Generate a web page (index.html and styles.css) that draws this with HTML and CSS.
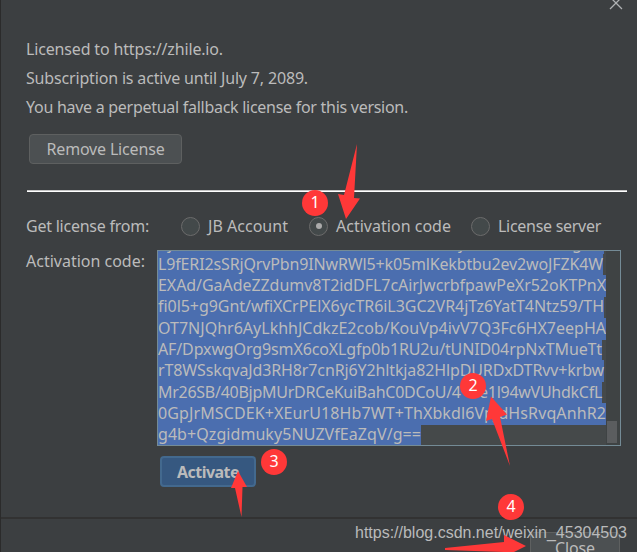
FILE: index.html
```html
<!DOCTYPE html>
<html lang="en">
<head>
<meta charset="utf-8">
<title>Licenses</title>
<link rel="stylesheet" href="styles.css">
</head>
<body>
<main class="dialog">
  <svg class="close-x" viewBox="0 0 14 14"><path d="M1 1 13 13M13 1 1 13"/></svg>
  <section class="status">
    <p><span data-width="197">Licensed to https://zhile.io.</span></p>
    <p><span data-width="282">Subscription is active until July 7, 2089.</span></p>
    <p><span data-width="382">You have a perpetual fallback license for this version.</span></p>
    <button class="button remove"><span data-width="118">Remove License</span></button>
  </section>
  <hr class="rule">
  <section class="source">
    <span class="label"><span data-width="123">Get license from:</span></span>
    <span class="option jb"><i class="radio"></i><span data-width="80">JB Account</span></span>
    <span class="option code"><i class="radio on"></i><span data-width="115">Activation code</span></span>
    <span class="option server"><i class="radio"></i><span data-width="103">License server</span></span>
  </section>
  <section class="activation">
    <span class="label"><span data-width="119">Activation code:</span></span>
    <div class="area">
      <div class="lines">
        <div class="clipped"><b>j</b><b>j</b><b>g</b></div>
        <div><span data-width="445">L9fERI2sSRjQrvPbn9INwRWl5+k05mlKekbtbu2ev2woJFZK4W</span></div>
        <div><span data-width="448">EXAd/GaAdeZZdumv8T2idDFL7cAirJwcrbfpawPeXr52oKTPnX</span></div>
        <div><span data-width="446">fi0l5+g9Gnt/wfiXCrPElX6ycTR6iL3GC2VR4jTz6YatT4Ntz59/TH</span></div>
        <div><span data-width="448">OT7NJQhr6AyLkhhJCdkzE2cob/KouVp4ivV7Q3Fc6HX7eepHA</span></div>
        <div><span data-width="444">AF/DpxwgOrg9smX6coXLgfp0b1RU2u/tUNID04rpNxTMueTt</span></div>
        <div><span data-width="446">rT8WSskqvaJd3RH8r7cnRj6Y2hltkja82HlpDURDxDTRvv+krbw</span></div>
        <div><span data-width="444">Mr26SB/40BjpMUrDRCeKuiBahC0DCoU/4+Pe1l94wVUhdkCfL</span></div>
        <div><span data-width="448">0GpJrMSCDEK+XEurU18Hb7WT+ThXbkdl6VpJdHsRvqAnhR2</span></div>
        <div><span data-width="263">g4b+Qzgidmuky5NUZVfEaZqV/g==</span></div>
      </div>
      <div class="track"><i class="thumb"></i></div>
    </div>
  </section>
  <button class="button activate"><span data-width="62">Activate</span></button>
  <footer class="footer">
    <button class="button close"><span data-width="40">Close</span></button>
  </footer>
  <div class="watermark"><span data-width="272">https://blog.csdn.net/weixin_45304503</span></div>
  <svg class="arrows" viewBox="0 0 637 552">
    <path d="M357 144 354 198 360 198.500 346 219 338 194 344 195Z"/>
    <path d="M491 396.500 507 414.500 500 417 510 466 492 419 486 421Z"/>
    <path d="M238 471 247 487 242.500 487 241.500 517 235 488 231 488Z"/>
    <path d="M526 546 504 557 504 552 445 550 445 548 504 542 504 535Z"/>
  </svg>
  <b class="badge one">1</b><b class="badge two">2</b><b class="badge three">3</b><b class="badge four">4</b>
</main>
<script src="fit.js"></script>
</body>
</html>
```
FILE: styles.css
```css
* { box-sizing: border-box; }
body { margin: 0; background: #3c3f41; }
.dialog {
  position: relative; width: 637px; height: 552px; overflow: hidden;
  display: flex; flex-direction: column;
  border-left: 1px solid #2b2b2b; background: #3c3f41; color: #bbbbbb;
  font: 16px/29px "Noto Sans", "Open Sans", sans-serif; white-space: nowrap;
}
.dialog > * { flex-shrink: 0; }
p { margin: 0; }
.close-x { position: absolute; left: 608px; top: -4px; width: 14px; height: 14px; fill: none; stroke: #afb1b3; stroke-width: 1.3; }
.status { padding: 35px 0 0 25px; height: 190px; }
.button {
  display: flex; align-items: center; justify-content: center; padding: 0;
  border: 1px solid #5e6060; border-radius: 4px; background: #4c5052; color: #bbbbbb;
  font: 16px/20px "Noto Sans", "Open Sans", sans-serif; white-space: nowrap;
}
.remove { width: 153px; height: 30px; margin: 12px 0 0 3px; }
.rule { width: 600px; height: 2px; margin: 0 0 0 26px; border: 0; border-top: 1px solid #c5c5c5; background: #fff; }
.source { display: flex; align-items: center; height: 59px; padding: 9px 0 0 25px; }
.source .label { width: 155px; }
.option { display: flex; align-items: center; gap: 8px; }
.jb { width: 128px; }
.code { width: 162px; }
.radio { flex: none; display: block; width: 19px; height: 19px; border: 1px solid #6b6b6b; border-radius: 50%; background: #43494a; }
.radio.on::after { content: ""; display: block; width: 6px; height: 6px; margin: 5.500px; border-radius: 50%; background: #ababab; }
.activation { display: flex; height: 196px; margin-top: -1px; padding-left: 25px; }
.activation .label { width: 131px; line-height: 22px; }
.area { display: flex; justify-content: space-between; width: 464px; height: 196px; overflow: hidden; border: 1px solid #748b96; background: #45494a; }
.lines { margin-top: -18.500px; line-height: 21.330px; }
.lines div { height: 21.330px; }
.lines span { display: block; width: max-content; height: 21.800px; background: #4b6eaf; }
.lines .clipped { display: grid; grid-template-columns: 291px 113px 32px; width: 446px; padding-left: 10px; background: #4b6eaf; line-height: 20px; }
.clipped b { font-weight: 400; }
.track { display: flex; align-items: flex-end; width: 14px; padding: 0 1px 2px; background: #3f4344; }
.thumb { width: 10px; height: 22px; background: #5b5d5f; }
.activate { width: 96px; height: 31px; margin: 10px 0 0 159px; border: 2px solid #43698e; background: #365880; font-weight: 700; }
.footer { height: 40px; margin-top: 30px; border-top: 2px solid #323232; }
.close { width: 90px; height: 32px; margin: 13px 0 0 529px; }
.watermark { position: absolute; left: 354px; top: 521px; color: #b9babb; font: 16px/24px "Liberation Sans", Arial, sans-serif; }
.arrows { position: absolute; left: -1px; top: 0; width: 637px; height: 552px; fill: #ff3838; }
.badge { position: absolute; width: 26px; height: 26px; border-radius: 50%; background: #ff3838; color: #fff; font: 16px/24px "Noto Sans", sans-serif; text-align: center; }
.one { left: 301px; top: 190px; }
.two { left: 459px; top: 373px; }
.three { left: 260px; top: 449px; }
.four { left: 497px; top: 494px; }
```
FILE: fit.js
```js
document.querySelectorAll("[data-width]").forEach(function (el) {
  var gap = (Number(el.dataset.width) - el.getBoundingClientRect().width) / el.textContent.length;
  el.style.letterSpacing = gap + "px";
});
```
